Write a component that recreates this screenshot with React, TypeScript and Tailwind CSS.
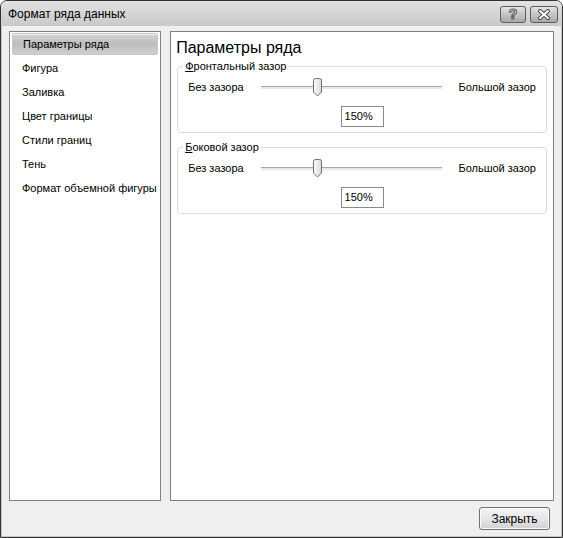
import React from "react";

const ITEMS = [
  "Параметры ряда",
  "Фигура",
  "Заливка",
  "Цвет границы",
  "Стили границ",
  "Тень",
  "Формат объемной фигуры",
];

function Thumb() {
  return (
    <svg width="11" height="19" viewBox="0 0 11 19" className="absolute left-[51px] top-[-9px]">
      <defs>
        <linearGradient id="tg" x1="0" y1="0" x2="1" y2="0">
          <stop offset="0" stopColor="#ffffff" />
          <stop offset="1" stopColor="#d8d8d8" />
        </linearGradient>
      </defs>
      <path d="M1.5 2.5 Q1.5 0.5 3.5 0.5 H7.5 Q9.5 0.5 9.5 2.5 V14 L5.5 18 L1.5 14 Z" fill="url(#tg)" stroke="#6f6f6f" />
    </svg>
  );
}

function SliderGroup({ title, hot }: { title: string; hot: string }) {
  return (
    <fieldset className="mx-[6px] rounded-[4px] border border-[#dcdcdc] px-[10px] pb-[5px]">
      <legend className="ml-[-5px] px-[2px] text-[11px] leading-[14px]">
        <u>{hot}</u>
        {title}
      </legend>
      <div className="mt-[4px] flex h-[20px] items-center whitespace-nowrap text-[11px]">
        <span className="w-[55px]">Без зазора</span>
        <div className="relative ml-[18px] h-[3px] w-[181px] border-t border-[#a8a8a8] bg-[#e8e8e8]">
          <Thumb />
        </div>
        <span className="ml-auto">Большой зазор</span>
      </div>
      <div className="mt-[9px] flex justify-center">
        <div className="flex h-[21px] w-[43px] items-center border border-[#8a8a8a] bg-white px-[3px] text-[11px]">
          150%
        </div>
      </div>
    </fieldset>
  );
}

function TitleButton({ children, wide }: { children: React.ReactNode; wide?: boolean }) {
  return (
    <div
      className={
        "flex h-[17px] items-center justify-center rounded-[3px] border border-[#5e5e5e] bg-gradient-to-b from-[#e4e4e4] via-[#c4c4c4] to-[#a8a8a8] " +
        (wide ? "w-[28px]" : "w-[26px]")
      }
    >
      {children}
    </div>
  );
}

export default function App() {
  return (
    <div
      className="flex h-[538px] w-[563px] flex-col overflow-hidden rounded-t-[7px] border border-[#333333] bg-[#efefef] text-black"
      style={{ fontFamily: '"Liberation Sans", Arial, sans-serif' }}
    >
      <div className="flex h-[25px] shrink-0 items-center bg-gradient-to-b from-[#e2e2e2] to-[#c9c9c9] pl-[7px] pr-[4px] pt-[1px]">
        <span className="text-[12px]">Формат ряда данных</span>
        <div className="ml-auto flex gap-[4px]">
          <TitleButton>
            <svg width="12" height="14" viewBox="0 0 12 14">
              <text
                x="6"
                y="12"
                textAnchor="middle"
                fontSize="14"
                fontWeight="bold"
                fontFamily="Liberation Sans, Arial, sans-serif"
                fill="#ffffff"
                stroke="#555555"
                strokeWidth="1"
              >
                ?
              </text>
            </svg>
          </TitleButton>
          <TitleButton wide>
            <svg width="14" height="11" viewBox="0 0 14 11">
              <path d="M3 2 L11 9 M11 2 L3 9" stroke="#4a4a4a" strokeWidth="4" strokeLinecap="round" />
              <path d="M3 2 L11 9 M11 2 L3 9" stroke="#ffffff" strokeWidth="2" strokeLinecap="round" />
            </svg>
          </TitleButton>
        </div>
      </div>

      <div className="flex flex-1 flex-col border-x border-b border-[#c4c4c4] px-[7px] pb-[6px] pt-[5px]">
        <div className="flex h-[470px] gap-[9px]">
          <div className="w-[153px] border border-[#808080] bg-white">
            {ITEMS.map((item, i) => (
              <div key={item} className="flex h-[24px] items-center px-[2px]">
                <div
                  className={
                    "flex h-[22px] w-full items-center pl-[10px] text-[11px] " +
                    (i === 0
                      ? "rounded-[2px] border border-[#c8c8c8] bg-gradient-to-b from-[#d6d6d6] via-[#bdbdbd] to-[#cfcfcf] shadow-[inset_0_1px_0_#eeeeee]"
                      : "")
                  }
                >
                  {item}
                </div>
              </div>
            ))}
          </div>

          <div className="flex w-[386px] flex-col border border-[#808080] bg-white">
            <div className="px-[5px] pt-[6px] text-[16px] leading-[20px]">Параметры ряда</div>
            <div className="mt-[1px]">
              <SliderGroup hot="Ф" title="ронтальный зазор" />
            </div>
            <div className="mt-[7px]">
              <SliderGroup hot="Б" title="оковой зазор" />
            </div>
          </div>
        </div>

        <div className="mt-[6px] flex justify-end pr-[4px]">
          <button
            type="button"
            className="h-[23px] w-[71px] rounded-[3px] border border-[#707070] bg-gradient-to-b from-[#f4f4f4] via-[#e6e6e6] to-[#d2d2d2] text-[12px] shadow-[inset_0_0_0_1px_#fbfbfb]"
          >
            Закрыть
          </button>
        </div>
      </div>
    </div>
  );
}
